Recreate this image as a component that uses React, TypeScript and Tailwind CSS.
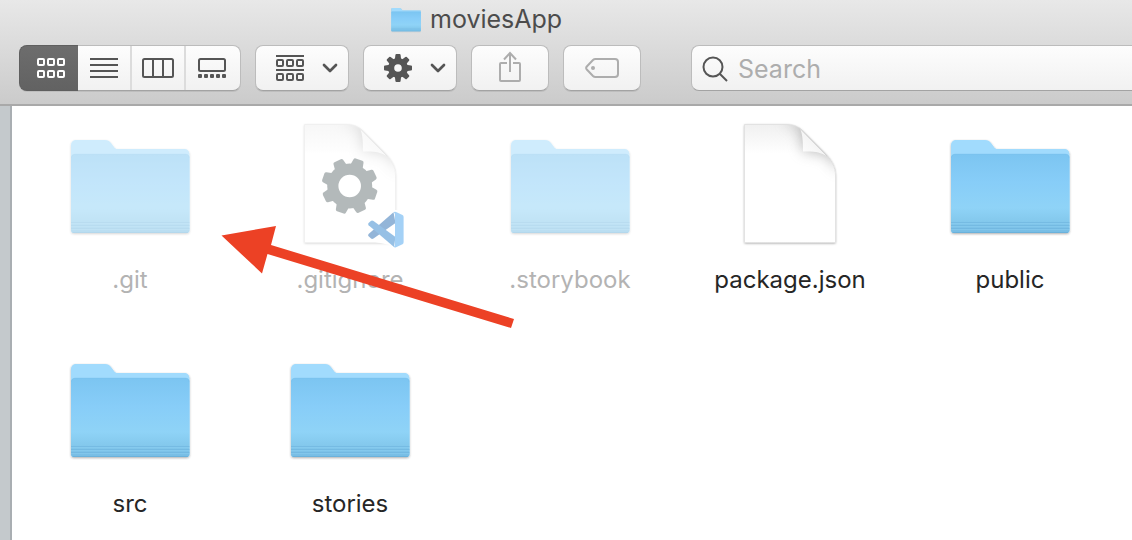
import React from "react";

const control =
  "flex h-[46px] shrink-0 items-center justify-center rounded-lg border border-[#bcbcbc] border-b-[#a3a3a3] bg-linear-to-b from-[#fdfdfd] to-[#f1f1f1] shadow-[0_1px_0_rgba(0,0,0,0.08)]";

function Folder({ id, className }: { id: string; className: string }) {
  return (
    <svg viewBox="0 0 128 128" className={className} aria-hidden="true">
      <defs>
        <linearGradient id={`${id}-front`} x1="0" y1="0" x2="0" y2="1">
          <stop offset="0" stopColor="#7cc5f1" />
          <stop offset="0.35" stopColor="#87cdf8" />
          <stop offset="0.68" stopColor="#8fd3f7" />
          <stop offset="0.86" stopColor="#83c8ec" />
          <stop offset="1" stopColor="#76bce4" />
        </linearGradient>
        <filter id={`${id}-shadow`} x="-10%" y="-10%" width="120%" height="125%">
          <feDropShadow dx="0" dy="1" stdDeviation="1" floodColor="#333" floodOpacity="0.4" />
        </filter>
      </defs>
      <g filter={`url(#${id}-shadow)`}>
        <path
          d="M5 25.500C5 22 7 20 10.500 20H39C42 20 43.500 21 45 23L48 27C49 28.500 50 29 52 29H118C121.500 29 123.500 31 123.500 34.500V110C123.500 112 122.500 113 120.500 113H8C6 113 5 112 5 110Z"
          fill="#a1dbfd"
        />
      </g>
      <path d="M5 38C5 35.500 6.500 34 9 34H119.500C122 34 123.500 35.500 123.500 38V110C123.500 112 122.500 113 120.500 113H8C6 113 5 112 5 110Z" fill={`url(#${id}-front)`} />
      <path d="M5.500 38C5.500 35.500 7 34.200 9 34.200H119.500C121.500 34.200 123 35.500 123 38" fill="none" stroke="#78beea" strokeWidth="0.500" />
      <path d="M5 102.500H123.500M5 105.500H123.500M5 108.500H123.500" stroke="#6cb2dd" strokeWidth="1" opacity="0.55" />
      <path d="M5 103.500H123.500M5 106.500H123.500M5 109.500H123.500" stroke="#91d2f4" strokeWidth="0.800" opacity="0.45" />
      <path d="M6.500 112.500H122" stroke="#68aed8" strokeWidth="0.800" />
    </svg>
  );
}

function Page({ id, configured = false }: { id: string; configured?: boolean }) {
  const outline =
    "M18.500 4.500H60C68 4.500 73 7 77 11L98 32C106 40 109.500 47 109.500 56V122.500H18.500Z";
  return (
    <svg viewBox="0 0 128 128" className="size-32 overflow-visible" aria-hidden="true">
      <defs>
        <clipPath id={`${id}-clip`}>
          <path d={outline} />
        </clipPath>
        <filter id={`${id}-shadow`} x="-10%" y="-10%" width="120%" height="120%">
          <feDropShadow dx="0" dy="0.800" stdDeviation="0.900" floodColor="#000" floodOpacity="0.4" />
        </filter>
        <filter id={`${id}-soft`} x="-50%" y="-50%" width="200%" height="200%">
          <feGaussianBlur stdDeviation="7" />
        </filter>
        <linearGradient id={`${id}-top`} x1="0" y1="0" x2="0" y2="1">
          <stop offset="0" stopColor="#f0f0f0" />
          <stop offset="0.25" stopColor="#fff" />
        </linearGradient>
        <linearGradient id={`${id}-fold`} x1="0" y1="1" x2="0.600" y2="0.400">
          <stop offset="0" stopColor="#fff" />
          <stop offset="1" stopColor="#f2f2f2" />
        </linearGradient>
      </defs>
      <path d={outline} fill="#fff" filter={`url(#${id}-shadow)`} />
      <path d={outline} fill={`url(#${id}-top)`} />
      <g clipPath={`url(#${id}-clip)`}>
        <path d="M56 0L74 8L77 31L100 34L114 52V20L90 0Z" fill="#777" opacity="0.5" filter={`url(#${id}-soft)`} />
      </g>
      <path d="M74 8.500C76 13 77 18 77 31.500C88 31 94 32 101 36Z" fill={`url(#${id}-fold)`} />
      <path d="M74 8.500L101 36" stroke="#cdcdcd" strokeWidth="0.800" />
      <path d={outline} fill="none" stroke="#dadada" strokeWidth="0.700" />
      {configured && (
        <g>
          <g transform="translate(63.700 66)" fill="#6a7678">
            {[22.5, 67.5, 112.5, 157.5, 202.5, 247.5, 292.5, 337.5].map((angle) => (
              <path key={angle} transform={`rotate(${angle - 3})`} d="M-6.500 -20L-5.300 -26.500Q-5 -28 -3.500 -28H3.500Q5 -28 5.300 -26.500L6.500 -20Z" />
            ))}
            <path fillRule="evenodd" d="M0 -22.500A22.500 22.500 0 1 1 0 22.500A22.500 22.500 0 1 1 0 -22.500ZM0 -11.300A11.300 11.300 0 1 0 0 11.300A11.300 11.300 0 1 0 0 -11.300Z" />
          </g>
          <path d="M84 99L108 90H114V126L104 125L84 121Z" fill="#fff" />
          <path d="M82.600 114L107.500 92.300L109.500 103L87.500 118.500Q86 119.500 84.800 118.300L82.600 116.300Q81.500 115.200 82.600 114Z" fill="#2a6db3" />
          <path d="M82.600 103L84.800 101Q86 100 87.500 101L109.500 117L108 127L82.600 105.200Q81.500 104 82.600 103Z" fill="#2f83cc" />
          <path d="M107.500 92.300Q108.700 91.300 110 92L116.500 95Q117.600 95.500 117.600 97V122.300Q117.600 123.600 116.500 124.200L110 127.200Q108.700 127.800 107.500 126.800Q109 126.300 109 124.500V95Q109 93 107.500 92.300Z" fill="#4ba4ee" />
        </g>
      )}
    </svg>
  );
}

function Chevron() {
  return (
    <svg viewBox="0 0 16 10" className="h-[10px] w-4" fill="none" stroke="#555" strokeWidth="2.700" strokeLinecap="round" strokeLinejoin="round" aria-hidden="true">
      <path d="M2 2L8 8L14 2" />
    </svg>
  );
}

function SmallSquares({ rows, className }: { rows: number[]; className: string }) {
  return (
    <g className={className} fill="none" strokeWidth="2">
      {rows.map((y) => [1, 11, 21].map((x) => <rect key={`${x}-${y}`} x={x} y={y} width="6" height="6" rx="1" />))}
    </g>
  );
}

type Item = { name: string; kind: "folder" | "page" | "config"; hidden?: boolean };

const items: Item[] = [
  { name: ".git", kind: "folder", hidden: true },
  { name: ".gitignore", kind: "config", hidden: true },
  { name: ".storybook", kind: "folder", hidden: true },
  { name: "package.json", kind: "page" },
  { name: "public", kind: "folder" },
  { name: "src", kind: "folder" },
  { name: "stories", kind: "folder" },
];

export default function App() {
  return (
    <div className="flex min-h-screen flex-col overflow-hidden bg-white font-[Inter,'Liberation_Sans',sans-serif]">
      <header className="border-b-2 border-[#a9a9a9] bg-linear-to-b from-[#e8e8e8] to-[#cbcbcb]">
        <div className="flex h-[38px] items-center gap-2 pl-[390px]">
          <Folder id="title" className="size-8" />
          <h1 className="text-[25px] leading-8 text-[#4c4c4c]">moviesApp</h1>
        </div>
        <div className="flex items-center gap-[14px] pt-[7px] pb-[13px] pl-[19px]">
          <div role="group" aria-label="View" className={`${control} w-[222px]`}>
            <button aria-label="Icons" aria-pressed="true" className="-my-px -ml-px flex h-[46px] w-[59px] items-center justify-center rounded-l-lg border border-r-0 border-[#5f5f5f] bg-linear-to-b from-[#6d6d6d] to-[#626262]">
              <svg viewBox="0 0 28 20" className="ml-[3px] h-5 w-7" aria-hidden="true">
                <SmallSquares rows={[1, 13]} className="stroke-white" />
              </svg>
            </button>
            <button aria-label="List" className="flex h-full w-[54px] items-center justify-center border-r-2 border-[#dcdcdc]">
              <svg viewBox="0 0 28 20" className="h-5 w-7" stroke="#555" strokeWidth="2" aria-hidden="true">
                <path d="M0 1H28M0 7H28M0 13H28M0 19H28" />
              </svg>
            </button>
            <button aria-label="Columns" className="flex h-full w-[54px] items-center justify-center border-r-2 border-[#dcdcdc]">
              <svg viewBox="0 0 32 20" className="h-5 w-8" fill="none" stroke="#555" strokeWidth="2" aria-hidden="true">
                <rect x="1" y="1" width="30" height="18" rx="1.500" />
                <path d="M11 1V19M21 1V19" />
              </svg>
            </button>
            <button aria-label="Gallery" className="flex h-full flex-1 items-center justify-center pr-[2px]">
              <svg viewBox="0 0 28 20" className="h-5 w-7" fill="none" stroke="#555" strokeWidth="2" aria-hidden="true">
                <rect x="1" y="1" width="26" height="12" rx="1.500" />
                <g fill="#555" stroke="none">
                  {[0, 6, 12, 18, 24].map((x) => (
                    <rect key={x} x={x} y="16" width="4" height="4" rx="1" />
                  ))}
                </g>
              </svg>
            </button>
          </div>
          <button aria-label="Group items" className={`${control} w-[94px] gap-[18px] pl-[10px]`}>
            <svg viewBox="0 0 28 26" className="h-[26px] w-7" aria-hidden="true">
              <path d="M0 1H28M0 15H28" stroke="#555" strokeWidth="2" />
              <SmallSquares rows={[5, 19]} className="stroke-[#555]" />
            </svg>
            <Chevron />
          </button>
          <button aria-label="Actions" className={`${control} w-[94px] gap-[18px] pl-[10px]`}>
            <svg viewBox="-14 -14 28 28" className="size-7" fill="#555" aria-hidden="true">
              {[0, 45, 90, 135, 180, 225, 270, 315].map((angle) => (
                <path key={angle} transform={`rotate(${angle})`} d="M-3.200 -8L-2.600 -13Q-2.500 -14 -1.600 -14H1.600Q2.500 -14 2.600 -13L3.200 -8Z" />
              ))}
              <path fillRule="evenodd" d="M0 -10A10 10 0 1 1 0 10A10 10 0 1 1 0 -10ZM0 -3.800A3.800 3.800 0 1 0 0 3.800A3.800 3.800 0 1 0 0 -3.800Z" />
            </svg>
            <Chevron />
          </button>
          <button aria-label="Share" className={`${control} w-[78px]`}>
            <svg viewBox="0 0 24 32" className="mb-[2px] h-8 w-6" fill="none" stroke="#adadad" strokeWidth="2" aria-hidden="true">
              <path d="M9 12H3Q2 12 2 13V29Q2 30 3 30H21Q22 30 22 29V13Q22 12 21 12H15M12 21V2M6 8.500L12 2L18 8.500" />
            </svg>
          </button>
          <button aria-label="Edit tags" className={`${control} w-[78px]`}>
            <svg viewBox="0 0 34 20" className="h-5 w-[34px]" fill="none" stroke="#adadad" strokeWidth="2" aria-hidden="true">
              <path d="M10.500 1H30Q33 1 33 4V16Q33 19 30 19H10.500Q9 19 8 18L1.800 11.500Q0.500 10 1.800 8.500L8 2Q9 1 10.500 1Z" />
              <circle cx="8" cy="10" r="2" fill="#adadad" stroke="none" />
            </svg>
          </button>
          <div className="ml-9 flex h-[46px] min-w-0 flex-1 items-center gap-[10px] rounded-l-lg border border-r-0 border-[#bcbcbc] border-b-[#a3a3a3] bg-linear-to-b from-[#fdfdfd] to-[#f1f1f1] pt-[2px] pl-[10px]">
            <svg viewBox="0 0 26 26" className="size-[26px] shrink-0" fill="none" stroke="#555" strokeWidth="2" aria-hidden="true">
              <circle cx="11" cy="11" r="9.500" />
              <path d="M17.500 17.500L25 25" />
            </svg>
            <input type="search" aria-label="Search" placeholder="Search" className="min-w-0 flex-1 bg-transparent text-[25px] leading-8 text-[#333] outline-none placeholder:text-[#adadad]" />
          </div>
        </div>
      </header>

      <div className="relative flex flex-1">
        <aside className="w-3 shrink-0 border-r-2 border-[#a9aeb2] bg-[#c4c9cc]" />
        <main className="min-w-0 flex-1 overflow-hidden bg-white pt-[14px] pl-2">
          <ul className="grid grid-cols-[repeat(auto-fill,220px)] gap-y-12">
            {items.map((item) => (
              <li key={item.name} className="flex flex-col items-center gap-4">
                <div className={item.hidden ? "opacity-50" : ""}>
                  {item.kind === "folder" ? (
                    <Folder id={item.name.replace(".", "")} className="size-32" />
                  ) : (
                    <Page id={item.kind} configured={item.kind === "config"} />
                  )}
                </div>
                <span className={`text-2xl leading-8 ${item.hidden ? "text-[#b3b3b3]" : "text-[#262626]"}`}>{item.name}</span>
              </li>
            ))}
          </ul>
        </main>
        <svg viewBox="0 0 296 106" className="pointer-events-none absolute top-[118px] left-[220px] h-[106px] w-[296px]" aria-hidden="true">
          <path d="M1.500 11.500L56 2L51 21L294 95L291 104L47.500 30L42 49.500Z" fill="#ec4125" />
        </svg>
      </div>
    </div>
  );
}
